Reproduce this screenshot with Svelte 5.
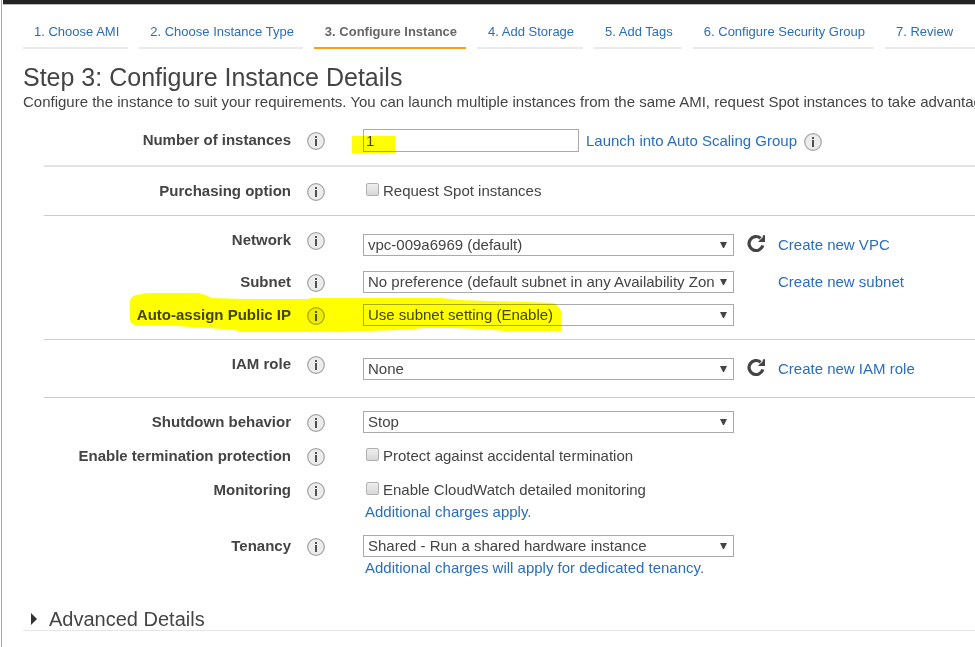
<script>
  const steps = [
    '1. Choose AMI',
    '2. Choose Instance Type',
    '3. Configure Instance',
    '4. Add Storage',
    '5. Add Tags',
    '6. Configure Security Group',
    '7. Review'
  ];
  const current = 2;

  let count = $state('1');
  let spot = $state(false);
  let protect = $state(false);
  let monitor = $state(false);
</script>

{#snippet info(topic)}
  <button class="info" type="button" aria-label={'About ' + topic}>
    <svg viewBox="0 0 18 18" width="18" height="18" aria-hidden="true">
      <circle cx="9" cy="9" r="8.3" fill="#ececec" stroke="#a3a3a3" stroke-width="1.2" />
      <rect x="8" y="4" width="2" height="2" fill="#505050" />
      <rect x="8" y="7" width="2" height="7" fill="#505050" />
    </svg>
  </button>
{/snippet}

{#snippet refresh(topic)}
  <button class="refresh" type="button" aria-label={'Refresh ' + topic}>
    <svg viewBox="0 0 18 18" width="18" height="18" aria-hidden="true">
      <path d="M13.6 4.2A7 7 0 1 0 15.8 11.4" fill="none" stroke="#444" stroke-width="3.2" />
      <path d="M18 1V8H11L13.4 5.6L15.6 3.4L15.9 1.6z" fill="#444" />
    </svg>
  </button>
{/snippet}

{#snippet dropdown(id, text)}
  <span class="select">
    <select {id}><option>{text}</option></select>
    <svg viewBox="0 0 7 7" width="7" height="7" aria-hidden="true"><path d="M0 0H7L4 6H3z" fill="#444" /></svg>
  </span>
{/snippet}

<div class="page">
  <div class="topbar"></div>
  <main>
    <nav aria-label="Launch steps">
      {#each steps as step, i}
        <a href={'#step' + (i + 1)} class:active={i === current} aria-current={i === current ? 'step' : undefined}>{step}</a>
      {/each}
    </nav>

    <h1>Step 3: Configure Instance Details</h1>
    <p class="intro">Configure the instance to suit your requirements. You can launch multiple instances from the same AMI, request Spot instances to take advantage</p>

    <form>
      <section class="first">
        <div class="row">
          <label for="count">Number of instances</label>
          {@render info('number of instances')}
          <div class="inline">
            <input id="count" type="text" bind:value={count} />
            <a href="#asg">Launch into Auto Scaling Group</a>
            {@render info('Auto Scaling groups')}
          </div>
          <span class="mark mark-count"></span>
        </div>
      </section>

      <section>
        <div class="row">
          <span class="label">Purchasing option</span>
          {@render info('purchasing option')}
          <label class="check"><input type="checkbox" bind:checked={spot} />Request Spot instances</label>
        </div>
      </section>

      <section>
        <div class="row">
          <label for="network">Network</label>
          {@render info('network')}
          <div class="controls roomy">
            {@render dropdown('network', 'vpc-009a6969 (default)')}
            {@render refresh('networks')}
            <a href="#vpc">Create new VPC</a>
          </div>
        </div>
        <div class="row">
          <label for="subnet">Subnet</label>
          {@render info('subnet')}
          <div class="controls">
            {@render dropdown('subnet', 'No preference (default subnet in any Availability Zone)')}
            <a class="link" href="#subnets">Create new subnet</a>
          </div>
        </div>
        <div class="row">
          <label for="public-ip">Auto-assign Public IP</label>
          {@render info('public IP')}
          <div class="controls">
            {@render dropdown('public-ip', 'Use subnet setting (Enable)')}
          </div>
          <svg class="mark mark-ip" viewBox="0 0 433 40" width="433" height="40" aria-hidden="true">
            <path d="M1 8Q2 3 7 2L18 0H70L76 2L83 5L114 6H181V5H312L330 7L358 8L400 9L424 10Q432 13 432 20V38H376L350 36L325 35H296L270 37L240 38H219V39H112L106 37L80 35L62 34L32 32H6Q1 31 1 27Z" fill="#ff0" />
          </svg>
        </div>
      </section>

      <section>
        <div class="row">
          <label for="iam">IAM role</label>
          {@render info('IAM role')}
          <div class="controls roomy">
            {@render dropdown('iam', 'None')}
            {@render refresh('IAM roles')}
            <a href="#role">Create new IAM role</a>
          </div>
        </div>
      </section>

      <section class="last">
        <div class="row">
          <label for="shutdown">Shutdown behavior</label>
          {@render info('shutdown behavior')}
          <div class="controls">{@render dropdown('shutdown', 'Stop')}</div>
        </div>
        <div class="row">
          <span class="label">Enable termination protection</span>
          {@render info('termination protection')}
          <label class="check"><input type="checkbox" bind:checked={protect} />Protect against accidental termination</label>
        </div>
        <div class="row">
          <span class="label">Monitoring</span>
          {@render info('monitoring')}
          <div>
            <label class="check"><input type="checkbox" bind:checked={monitor} />Enable CloudWatch detailed monitoring</label>
            <a class="note" href="#charges">Additional charges apply.</a>
          </div>
        </div>
        <div class="row">
          <label for="tenancy">Tenancy</label>
          {@render info('tenancy')}
          <div>
            <div class="controls">{@render dropdown('tenancy', 'Shared - Run a shared hardware instance')}</div>
            <a class="note" href="#tenancy-charges">Additional charges will apply for dedicated tenancy.</a>
          </div>
        </div>
      </section>
    </form>

    <h2>
      <button type="button" aria-expanded="false">
        <svg viewBox="0 0 6 12" width="6" height="12" aria-hidden="true"><path d="M0 0L6 6L0 12z" fill="#333" /></svg>
        Advanced Details
      </button>
    </h2>
  </main>
</div>

<style>
  :global(body) {
    margin: 0;
    background: #fff;
  }
  .page {
    box-sizing: border-box;
    min-height: 100vh;
    margin-left: 1px;
    border-left: 1px solid #a8a8a8;
    padding-left: 1px;
    overflow: hidden;
    color: #444;
    font: 15px/22px "Liberation Sans", Arial, sans-serif;
  }
  .topbar {
    height: 4px;
    background: #222;
    border-bottom: 1px solid #bbb;
  }
  main {
    padding-left: 20px;
  }
  a {
    color: #2a6ebb;
    text-decoration: none;
    white-space: nowrap;
  }
  button {
    padding: 0;
    border: 0;
    background: none;
    color: inherit;
    font: inherit;
    cursor: pointer;
  }
  svg {
    display: block;
  }

  nav {
    display: flex;
    gap: 11px;
    padding-top: 16px;
    font-size: 13px;
  }
  nav a {
    flex: none;
    padding: 0 9px 4px 11px;
    border-bottom: 2px solid #eaeaea;
  }
  nav a:last-child {
    flex: 1 0 auto;
  }
  nav a.active {
    border-color: #ff9c1a;
    color: #666;
    font-weight: bold;
  }
  h1 {
    margin: 13px 0 0;
    font-size: 25px;
    font-weight: normal;
    line-height: 30px;
    white-space: nowrap;
  }
  .intro {
    margin: 0;
    line-height: 20px;
    white-space: nowrap;
  }

  form {
    padding: 4px 0 0 21px;
  }
  section {
    display: flex;
    flex-direction: column;
    gap: 11px;
    padding: 13px 0;
    border-bottom: 1px solid #ccc;
  }
  .first {
    border-bottom: 2px solid #e2e2e2;
  }
  .last {
    gap: 12px;
    border-bottom: 0;
  }
  .row {
    position: relative;
    display: grid;
    grid-template-columns: 247px 18px 1fr;
    column-gap: 16px;
    align-items: start;
  }
  .row > :nth-child(3) {
    margin-left: 22px;
  }
  .row > :first-child {
    text-align: right;
    font-weight: bold;
    white-space: nowrap;
  }
  .info {
    height: 18px;
    margin-top: 3px;
  }
  .inline {
    display: flex;
    align-items: center;
    gap: 7px;
  }
  .controls {
    display: grid;
    grid-template-columns: 371px 18px auto;
    column-gap: 13px;
    justify-content: start;
  }
  .roomy {
    padding: 5px 0 4px;
  }
  .link {
    grid-column: 3;
  }
  .refresh {
    height: 18px;
  }
  #count {
    box-sizing: border-box;
    width: 216px;
    height: 23px;
    padding: 0 2px;
    border: 1px solid #aaa;
    border-radius: 0;
    background: #fff;
    color: inherit;
    font: inherit;
  }
  .select {
    position: relative;
    display: block;
  }
  select {
    display: block;
    box-sizing: border-box;
    width: 100%;
    height: 22px;
    padding: 0 19px 0 4px;
    appearance: none;
    border: 1px solid #aaa;
    border-radius: 0;
    background: #fff;
    color: inherit;
    font: inherit;
    line-height: 20px;
  }
  .select svg {
    position: absolute;
    right: 7px;
    top: 8px;
    pointer-events: none;
  }
  .check {
    display: flex;
    gap: 4px;
    white-space: nowrap;
  }
  .check input {
    appearance: none;
    box-sizing: border-box;
    width: 13px;
    height: 13px;
    margin: 3px 0 0 3px;
    border: 1px solid #b0b0b0;
    border-radius: 2px;
    background: linear-gradient(#eee, #d8d8d8);
  }
  .check input:checked {
    background: #2a6ebb;
  }
  .note {
    display: block;
    padding-left: 2px;
  }
  .mark {
    position: absolute;
    mix-blend-mode: multiply;
    pointer-events: none;
  }
  .mark-count {
    left: 308px;
    top: 7px;
    width: 43px;
    height: 17px;
    background: #ff0;
  }
  .mark-ip {
    left: 85px;
    top: -11px;
  }

  h2 {
    margin: 16px 0 0;
    border-bottom: 1px solid #e6e6e6;
    font-size: 20px;
    font-weight: normal;
    line-height: 22px;
  }
  h2 button {
    display: flex;
    align-items: center;
    gap: 12px;
    padding-left: 8px;
  }
</style>
